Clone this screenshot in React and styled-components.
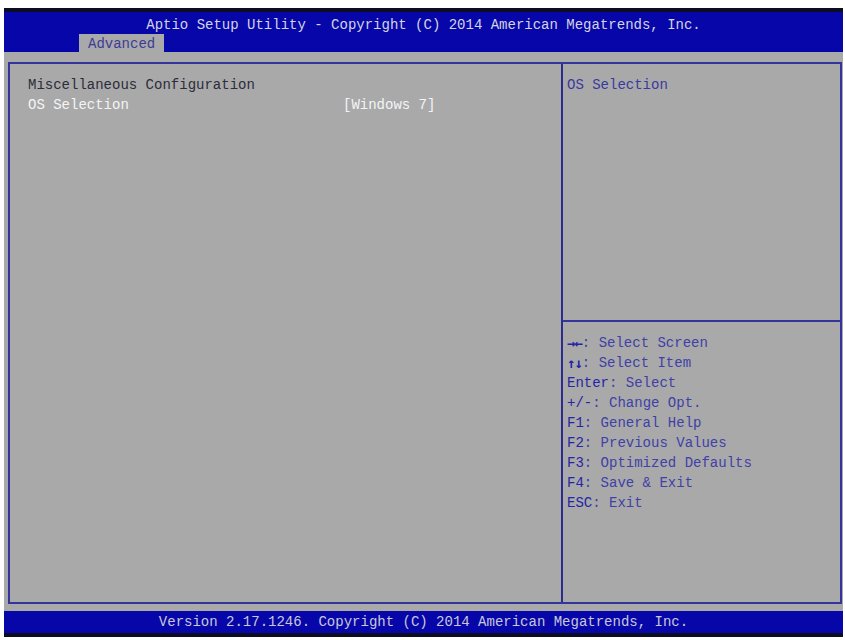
import React from "react";
import styled, { createGlobalStyle } from "styled-components";

const GlobalStyle = createGlobalStyle`
  body {
    margin: 0;
    background: #ffffff;
    font-family: "Liberation Mono", "DejaVu Sans Mono", monospace;
    font-size: 14px;
  }
`;

const Screen = styled.div`
  width: 839px;
  margin: 8px 0 0 4px;
  display: flex;
  flex-direction: column;
`;

const TopBar = styled.div`
  height: 40px;
  border-top: 4px solid #0c0c22;
  background: #0707a9;
  display: flex;
  flex-direction: column;
  justify-content: space-between;
`;

const Title = styled.div`
  padding-top: 4px;
  line-height: 18px;
  text-align: center;
  color: #d4d4e2;
  white-space: pre;
`;

const Tab = styled.div`
  margin-left: 75px;
  width: 85px;
  height: 19px;
  box-sizing: border-box;
  padding-left: 9px;
  line-height: 20px;
  background: #a9a9a9;
  color: #3c3c96;
`;

const Main = styled.div`
  background: #a9a9a9;
  padding: 10px 1px 7px 4px;
`;

const Frame = styled.div`
  box-sizing: border-box;
  width: 834px;
  height: 542px;
  border: 2px solid #34349c;
  display: flex;
`;

const LeftPanel = styled.div`
  flex: 0 0 553px;
  box-sizing: border-box;
  border-right: 2px solid #2c2c8e;
  padding: 11px 0 0 18px;
  line-height: 20px;
`;

const Heading = styled.div`
  color: #2c2c3a;
`;

const Row = styled.div`
  display: grid;
  grid-template-columns: 315px auto;
  color: ${(p) => (p.selected ? "#f4f4f6" : "#2c2c3a")};
  white-space: pre;
`;

const RightPanel = styled.div`
  flex: 1;
  display: flex;
  flex-direction: column;
  line-height: 20px;
`;

const HelpText = styled.div`
  height: 258px;
  box-sizing: border-box;
  border-bottom: 2px solid #34349c;
  padding: 11px 4px;
  color: #3a3aa0;
`;

const KeyList = styled.div`
  padding: 11px 2px 0 4px;
  color: #4040a8;
  white-space: pre;
`;

const KeyLine = styled.div`
  height: 20px;
  display: flex;
  align-items: center;
`;

const Key = styled.span`
  color: #2424a8;
  font-family: ${(p) => (p.glyph ? '"DejaVu Sans Mono", monospace' : "inherit")};
  font-weight: ${(p) => (p.glyph ? 700 : 400)};
  letter-spacing: ${(p) => (p.glyph ? "-1px" : "0")};
  line-height: 20px;
`;

const Footer = styled.div`
  height: 22px;
  line-height: 22px;
  background: #0707a9;
  border-bottom: 4px solid #0c0c22;
  text-align: center;
  color: #c8c8da;
  white-space: pre;
`;

const keys = [
  ["→←", ": Select Screen", true],
  ["↑↓", ": Select Item", true],
  ["Enter", ": Select"],
  ["+/-", ": Change Opt."],
  ["F1", ": General Help"],
  ["F2", ": Previous Values"],
  ["F3", ": Optimized Defaults"],
  ["F4", ": Save & Exit"],
  ["ESC", ": Exit"],
];

const App = () => {
  return (
    <>
      <GlobalStyle />
      <Screen>
        <TopBar>
          <Title>Aptio Setup Utility - Copyright (C) 2014 American Megatrends, Inc.</Title>
          <Tab>Advanced</Tab>
        </TopBar>
        <Main>
          <Frame>
            <LeftPanel>
              <Heading>Miscellaneous Configuration</Heading>
              <Row selected>
                <span>OS Selection</span>
                <span>[Windows 7]</span>
              </Row>
            </LeftPanel>
            <RightPanel>
              <HelpText>OS Selection</HelpText>
              <KeyList>
                {keys.map(([k, text, glyph]) => (
                  <KeyLine key={k}>
                    <Key glyph={glyph}>{k}</Key>
                    <span>{text}</span>
                  </KeyLine>
                ))}
              </KeyList>
            </RightPanel>
          </Frame>
        </Main>
        <Footer>Version 2.17.1246. Copyright (C) 2014 American Megatrends, Inc.</Footer>
      </Screen>
    </>
  );
};

export default App;
